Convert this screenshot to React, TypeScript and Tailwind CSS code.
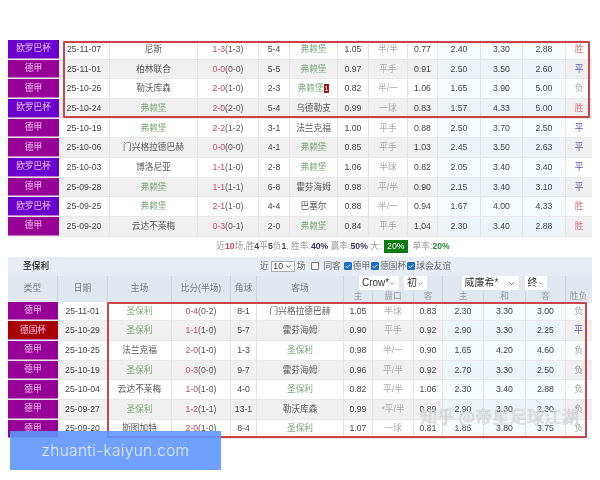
import { Check, ChevronDown } from "lucide-react";

const topCols = "grid grid-cols-[51px_51px_88px_61px_31px_48px_31px_39px_30px_43px_42px_43px_26px]";
const bottomCols = "grid grid-cols-[50px_50px_64px_59px_26px_87px_29px_41px_29px_41px_42px_40px_25px]";

type Match = string[];

const topRows: Match[] = [
  ["欧罗巴杯", "25-11-07", "尼斯", "1-3", "(1-3)", "5-4", "弗赖堡", "1.05", "半/半", "0.77", "2.40", "3.30", "2.88", "胜"],
  ["德甲", "25-11-01", "柏林联合", "0-0", "(0-0)", "5-5", "弗赖堡", "0.97", "平手", "0.91", "2.50", "3.50", "2.60", "平"],
  ["德甲", "25-10-26", "勒沃库森", "2-0", "(1-0)", "2-3", "弗赖堡", "0.82", "半/一", "1.06", "1.65", "3.90", "5.00", "负"],
  ["欧罗巴杯", "25-10-24", "弗赖堡", "2-0", "(2-0)", "5-4", "乌德勒支", "0.99", "一球", "0.83", "1.57", "4.33", "5.00", "胜"],
  ["德甲", "25-10-19", "弗赖堡", "2-2", "(1-2)", "3-1", "法兰克福", "1.00", "平手", "0.88", "2.50", "3.70", "2.50", "平"],
  ["德甲", "25-10-06", "门兴格拉德巴赫", "0-0", "(0-0)", "4-1", "弗赖堡", "0.85", "平手", "1.03", "2.45", "3.50", "2.63", "平"],
  ["欧罗巴杯", "25-10-03", "博洛尼亚", "1-1", "(1-0)", "2-8", "弗赖堡", "1.06", "半球", "0.82", "2.05", "3.40", "3.40", "平"],
  ["德甲", "25-09-28", "弗赖堡", "1-1", "(1-1)", "6-8", "霍芬海姆", "0.98", "平/半", "0.90", "2.15", "3.40", "3.10", "平"],
  ["欧罗巴杯", "25-09-25", "弗赖堡", "2-1", "(1-0)", "4-4", "巴塞尔", "0.88", "半/一", "0.94", "1.67", "4.00", "4.33", "胜"],
  ["德甲", "25-09-20", "云达不莱梅", "0-3", "(0-1)", "2-0", "弗赖堡", "0.84", "平手", "1.04", "2.30", "3.40", "2.88", "胜"],
];

const bottomRows: Match[] = [
  ["德甲", "25-11-01", "圣保利", "0-4", "(0-2)", "8-1", "门兴格拉德巴赫", "1.05", "半球", "0.83", "2.30", "3.30", "3.00", "负"],
  ["德国杯", "25-10-29", "圣保利", "1-1", "(1-0)", "5-7", "霍芬海姆", "0.90", "平手", "0.92", "2.90", "3.30", "2.25", "平"],
  ["德甲", "25-10-25", "法兰克福", "2-0", "(1-0)", "1-3", "圣保利", "0.98", "半/一", "0.90", "1.65", "4.20", "4.60", "负"],
  ["德甲", "25-10-19", "圣保利", "0-3", "(0-0)", "9-7", "霍芬海姆", "0.96", "平/半", "0.92", "2.70", "3.30", "2.50", "负"],
  ["德甲", "25-10-04", "云达不莱梅", "1-0", "(1-0)", "4-0", "圣保利", "0.82", "平/半", "1.06", "2.30", "3.40", "2.88", "负"],
  ["德甲", "25-09-27", "圣保利", "1-2", "(1-1)", "13-1", "勒沃库森", "0.99", "*平/半", "0.89", "2.90", "3.30", "2.30", "负"],
  ["德甲", "25-09-20", "斯图加特", "2-0", "(1-0)", "8-4", "圣保利", "1.07", "一球", "0.81", "1.85", "3.80", "3.75", "负"],
];

const typeColor = (t: string) =>
  t === "欧罗巴杯" ? "bg-[#6a00cf]" : t === "德国杯" ? "bg-[#a80000]" : "bg-[#970097]";

const resultColor = (r: string) =>
  r === "胜" ? "text-[#d9717b]" : r === "平" ? "text-[#5a5ab4]" : "text-[#9aa39a]";

const teamColor = (team: string) =>
  team === "弗赖堡" || team === "圣保利" ? "text-[#7fa97f]" : "text-[#555]";

const Row = ({ m, cols, even }: { m: Match; cols: string; even: boolean }) => {
  const rowBg = even ? "bg-[#f0f0f0]" : "bg-white";
  const oddsBg = even ? "bg-[#ecf4f8]" : "bg-[#f6fbfd]";
  const cell = "flex items-center justify-center border-r border-[#e4e4e4]";
  return (
    <div className={`${cols} h-[19.67px] border-b border-[#e8e8e8] ${rowBg}`}>
      <div className={`flex items-center justify-center border-b border-[#c77ac7] text-[#f0c4f0] ${typeColor(m[0])}`}>
        {m[0]}
      </div>
      <div className={`${cell} text-[#444]`}>{m[1]}</div>
      <div className={`${cell} ${teamColor(m[2])}`}>{m[2]}</div>
      <div className={cell}>
        <span className="text-[#c8475a]">{m[3]}</span>
        <span className="text-[#555]">{m[4]}</span>
      </div>
      <div className={`${cell} text-[#444]`}>{m[5]}</div>
      <div className={`${cell} ${teamColor(m[6])}`}>
        {m[6]}
        {m[1] === "25-10-26" && (
          <span className="bg-[#a01818] px-px text-[7px] leading-[9px] text-white">1</span>
        )}
      </div>
      <div className={`${cell} text-[#444]`}>{m[7]}</div>
      <div className={`${cell} text-[#aaa]`}>{m[8]}</div>
      <div className={`${cell} text-[#444]`}>{m[9]}</div>
      <div className={`${cell} ${oddsBg} text-[#444]`}>{m[10]}</div>
      <div className={`${cell} ${oddsBg} text-[#444]`}>{m[11]}</div>
      <div className={`${cell} ${oddsBg} text-[#444]`}>{m[12]}</div>
      <div className={`flex items-center justify-center ${resultColor(m[13])}`}>{m[13]}</div>
    </div>
  );
};

const Box = ({ checked }: { checked: boolean }) => (
  <span
    className={`mx-px flex h-[8px] w-[8px] shrink-0 items-center justify-center rounded-[1px] border ${
      checked ? "border-[#1a6fc4] bg-[#1a6fc4]" : "border-[#777] bg-white"
    }`}
  >
    {checked && <Check size={7} strokeWidth={4} color="white" />}
  </span>
);

const Pick = ({ label, width }: { label: string; width: string }) => (
  <div className={`flex h-[14px] items-center justify-between rounded-[1px] bg-white px-[3px] text-[10px] text-[#333] ${width}`}>
    <span>{label}</span>
    <ChevronDown size={9} strokeWidth={2} color="#444" />
  </div>
);

export default function App() {
  return (
    <div
      className="relative h-[480px] w-[600px] overflow-hidden bg-white pl-[8px] pt-[40px] text-[8.7px] leading-none blur-[0.45px]"
      style={{ fontFamily: '"Liberation Sans", "Noto Sans CJK SC", sans-serif' }}
    >
      {/* TOP TABLE */}
      <div className="relative w-[584px]">
        {topRows.map((m, i) => (
          <Row key={m[1]} m={m} cols={topCols} even={i % 2 === 1} />
        ))}
        <div className="absolute left-[55px] top-[1px] h-[77px] w-[527px] rounded-[1px] border-2 border-[#c8434a]" />
      </div>

      {/* SUMMARY */}
      <div className="flex h-[20px] w-[584px] items-center justify-center whitespace-pre pl-[66px] text-[#999]">
        <span>近</span>
        <b className="text-[#c8475a]">10</b>
        <span>场,胜</span>
        <b className="text-[#444]">4</b>
        <span>平</span>
        <b className="text-[#444]">5</b>
        <span>负</span>
        <b className="text-[#444]">1</b>
        <span>, 胜率:</span>
        <b className="text-[#336]">40%</b>
        <span> 赢率:</span>
        <b className="text-[#336]">50%</b>
        <span> 大: </span>
        <span className="flex h-[13px] w-[24px] items-center justify-center bg-[#0b7a10] text-white">20%</span>
        <span>  单率:</span>
        <b className="text-[#2d8a3e]">20%</b>
      </div>

      {/* SECOND TABLE */}
      <div className="relative w-[584px]">
        <div className="flex h-[19px] items-center bg-[#e8edf3] pl-[15px] text-[#666]">
          <b className="w-[237px] text-[#444]">圣保利</b>
          <span className="mr-[2px]">近</span>
          <div className="flex h-[11px] w-[24px] items-center justify-center gap-[2px] border border-[#aaa] bg-white text-[#333]">
            10
            <ChevronDown size={7} strokeWidth={3} color="#333" />
          </div>
          <span className="ml-[2px] mr-[5px]">场</span>
          <Box checked={false} />
          <span className="ml-[3px] mr-[2px]">同客</span>
          <Box checked />
          <span>德甲</span>
          <Box checked />
          <span>德国杯</span>
          <Box checked />
          <span>球会友谊</span>
        </div>
        <div className={`${bottomCols} h-[26px] grid-rows-[15px_11px] bg-[#e0e7ef] text-[#777]`}>
          <div className="row-span-2 flex items-center justify-center border-r border-[#ccd4dd]">类型</div>
          <div className="row-span-2 flex items-center justify-center border-r border-[#ccd4dd]">日期</div>
          <div className="row-span-2 flex items-center justify-center border-r border-[#ccd4dd]">主场</div>
          <div className="row-span-2 flex items-center justify-center border-r border-[#ccd4dd]">比分(半场)</div>
          <div className="row-span-2 flex items-center justify-center border-r border-[#ccd4dd]">角球</div>
          <div className="row-span-2 flex items-center justify-center border-r border-[#ccd4dd]">客场</div>
          <div className="col-span-3 flex items-center justify-center gap-[5px] border-r border-[#ccd4dd]">
            <Pick label="Crow*" width="w-[40px]" />
            <Pick label="初" width="w-[23px]" />
          </div>
          <div className="col-span-3 flex items-center justify-center gap-[6px] border-r border-[#ccd4dd]">
            <Pick label="威廉希*" width="w-[57px]" />
            <Pick label="终" width="w-[22px]" />
          </div>
          <div />
          {["主", "盘口", "客", "主", "和", "客"].map((h, i) => (
            <div key={i} className="flex items-center justify-center border-r border-[#ccd4dd] text-[#999]">
              {h}
            </div>
          ))}
          <div className="flex items-center justify-center text-[#999]">胜负</div>
        </div>
        {bottomRows.map((m, i) => (
          <Row key={m[1]} m={m} cols={bottomCols} even={i % 2 === 1} />
        ))}
        <div className="absolute left-[99px] top-[45px] h-[136px] w-[480px] rounded-[1px] border-2 border-[#c8434a]" />
      </div>

      {/* WATERMARK */}
      <div
        className="absolute left-[420px] top-[407px] whitespace-nowrap text-[17px] tracking-[0.3px] text-white/70 [text-shadow:0_0_1px_#888]"
        style={{ fontFamily: '"Noto Sans CJK SC", sans-serif' }}
      >
        知乎 @帝星足球江湖
      </div>

      {/* BANNER */}
      <div
        className="absolute left-[10px] top-[431px] flex h-[39px] w-[211px] items-center justify-center bg-[#5f96fb]/90 text-[15.5px] font-light tracking-[0.3px] text-[#e4ecfd]"
        style={{ fontFamily: 'Inter, sans-serif' }}
      >
        zhuanti-kaiyun.com
      </div>
    </div>
  );
}
